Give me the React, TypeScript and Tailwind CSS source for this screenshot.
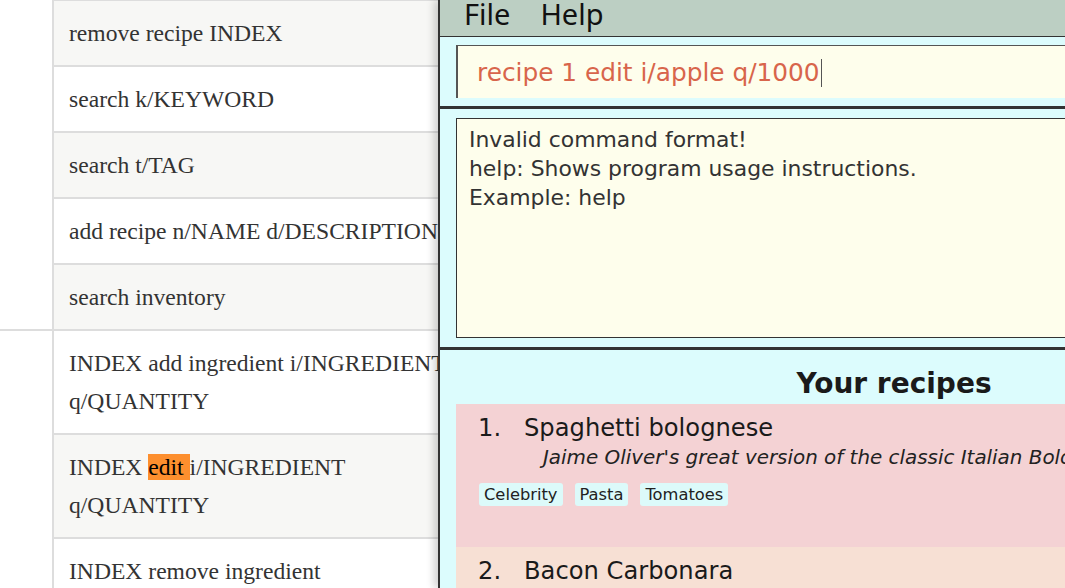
const groupOne = [
  { text: "remove recipe INDEX", shaded: true },
  { text: "search k/KEYWORD", shaded: false },
  { text: "search t/TAG", shaded: true },
  { text: "add recipe n/NAME d/DESCRIPTION", shaded: false },
  { text: "search inventory", shaded: true },
];

const tags = ["Celebrity", "Pasta", "Tomatoes"];

function Row({ shaded, first, children }: { shaded: boolean; first?: boolean; children: React.ReactNode }) {
  return (
    <div
      className={
        (first ? "" : "border-t-2 border-[#dddddd] ") +
        (shaded ? "bg-[#f7f7f5] " : "bg-white ") +
        "py-[13px] pl-[15px] pr-[15px]"
      }
    >
      {children}
    </div>
  );
}

function CommandTable() {
  return (
    <div className="w-[438px] flex-none overflow-hidden">
      <div className="-mt-px w-[488px] font-['Liberation_Serif',serif] text-[23.6px] leading-[38px] text-[#333]">
        <div className="flex">
          <div className="w-[54px] flex-none border-r-2 border-[#dddddd]" />
          <div className="flex-1 border-t-2 border-[#dddddd]">
            {groupOne.map((r, i) => (
              <Row key={r.text} shaded={r.shaded} first={i === 0}>
                {r.text}
              </Row>
            ))}
          </div>
        </div>
        <div className="flex border-t-2 border-[#dddddd]">
          <div className="w-[54px] flex-none border-r-2 border-[#dddddd]" />
          <div className="flex-1">
            <Row shaded={false} first>
              INDEX add ingredient i/INGREDIENT q/QUANTITY
            </Row>
            <Row shaded>
              INDEX <span className="bg-[#fd8f2e] text-black">edit </span>i/INGREDIENT q/QUANTITY
            </Row>
            <Row shaded={false}>INDEX remove ingredient i/INGREDIENT</Row>
          </div>
        </div>
      </div>
    </div>
  );
}

function RecipeWindow() {
  return (
    <div className="flex w-[910px] flex-none flex-col border-l-2 border-[#333] bg-[#dcfcfd] font-['DejaVu_Sans',sans-serif] shadow-[-4px_0_8px_rgba(0,0,0,0.18)]">
      <div className="flex h-[37px] flex-none items-start gap-[30px] border-b border-[#333] bg-[#bccfc3] pl-[24px] font-['Noto_Sans',sans-serif] text-[29px] leading-[27px] text-[#111]">
        <span>File</span>
        <span>Help</span>
      </div>

      <div className="px-[16px] pt-[8px] pb-[8px]">
        <div className="flex h-[53px] items-center border-t border-l-2 border-[#555] bg-[#fefeec] pt-[2px] pl-[19px] text-[24.8px] text-[#d8654b]">
          <span>recipe 1 edit i/apple q/1000</span>
          <span className="ml-px inline-block h-[28px] w-px bg-[#555]" />
        </div>
      </div>

      <div className="h-[3px] flex-none bg-[#333]" />

      <div className="px-[16px] pt-[9px] pb-[9px]">
        <div className="h-[220px] border border-[#333] bg-[#fefeec] px-[12px] pt-[6px] text-[21.9px] leading-[29px] text-[#333]">
          <div>Invalid command format!</div>
          <div>help: Shows program usage instructions.</div>
          <div>Example: help</div>
        </div>
      </div>

      <div className="h-[3px] flex-none bg-[#333]" />

      <div className="flex-1 px-[16px]">
        <div className="pt-[17px] pb-[3px] text-center text-[28px] font-bold leading-[34px] text-[#1a1a1a]">
          Your recipes
        </div>

        <div className="h-[143px] bg-[#f4d2d4] pt-[8px] pl-[22px]">
          <div className="flex text-[24.2px] leading-[32px] text-[#1a1a1a]">
            <span className="w-[46px] flex-none">1.</span>
            <span>Spaghetti bolognese</span>
          </div>
          <div className="pl-[65px] text-[19.9px] italic leading-[28px] whitespace-nowrap text-[#222]">
            Jaime Oliver's great version of the classic Italian Bolognese sauce
          </div>
          <div className="mt-[11px] flex gap-[12px] pl-px">
            {tags.map((t) => (
              <span
                key={t}
                className="h-[23px] rounded-[3px] bg-[#dcfafa] px-[5px] text-[16.3px] leading-[23px] text-[#222]"
              >
                {t}
              </span>
            ))}
          </div>
        </div>

        <div className="h-[143px] bg-[#f7e0d4] pt-[8px] pl-[22px]">
          <div className="flex text-[24.2px] leading-[32px] text-[#1a1a1a]">
            <span className="w-[46px] flex-none">2.</span>
            <span>Bacon Carbonara</span>
          </div>
        </div>
      </div>
    </div>
  );
}

export default function App() {
  return (
    <div className="flex h-[588px] w-[1065px] overflow-hidden bg-white">
      <CommandTable />
      <RecipeWindow />
    </div>
  );
}
